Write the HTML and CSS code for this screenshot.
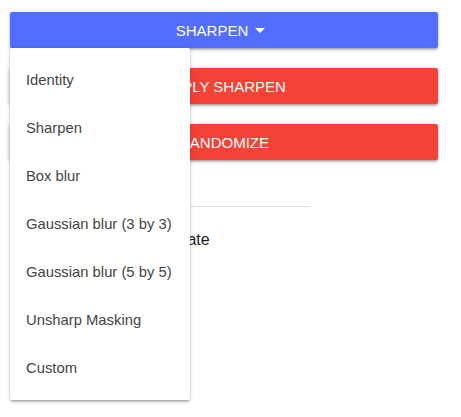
FILE: index.html
```html
<!DOCTYPE html>
<html>
<head>
<meta charset="utf-8">
<link rel="stylesheet" href="styles.css">
</head>
<body>
<div class="page">
  <div class="controls">
    <button class="btn btn-blue">SHARPEN<svg class="caret" width="24" height="24" viewBox="0 0 24 24"><path d="M7 10l5 5 5-5z" fill="#fff"/></svg></button>
    <button class="btn btn-red">APPLY SHARPEN</button>
    <button class="btn btn-red">RANDOMIZE</button>
  </div>
  <div class="divider"></div>
  <label class="option">Animate</label>
  <ul class="menu">
    <li>Identity</li>
    <li>Sharpen</li>
    <li>Box blur</li>
    <li>Gaussian blur (3 by 3)</li>
    <li>Gaussian blur (5 by 5)</li>
    <li>Unsharp Masking</li>
    <li>Custom</li>
  </ul>
</div>
</body>
</html>
```
FILE: styles.css
```css
* { box-sizing: border-box; }
html, body { margin: 0; padding: 0; background: #fff; }
body { font-family: "Liberation Sans", Arial, sans-serif; }
.page {
  position: relative;
  min-height: 417px;
  padding: 12px 23px 0 10px;
}
.controls {
  display: flex;
  flex-direction: column;
  gap: 20px;
}
.btn {
  height: 36px;
  border: none;
  border-radius: 2px;
  color: #fff;
  font-family: "Liberation Sans", Arial, sans-serif;
  font-size: 15px;
  display: flex;
  align-items: center;
  justify-content: center;
  padding: 0 16px;
  box-shadow: 0 2px 2px 0 rgba(0,0,0,0.14), 0 3px 1px -2px rgba(0,0,0,0.12), 0 1px 5px 0 rgba(0,0,0,0.2);
}
.btn-blue { background: #536dfe; }
.btn-red { background: #f44336; }
.caret { display: block; }
.divider {
  width: 300px;
  height: 1px;
  background: #e0e0e0;
  margin-top: 46px;
}
.option {
  display: block;
  font-size: 16px;
  color: #222;
  padding-left: 141px;
  margin-top: 24px;
}
.menu {
  position: absolute;
  top: 48px;
  left: 10px;
  width: 180px;
  margin: 0;
  padding: 8px 0;
  list-style: none;
  background: #fff;
  border-radius: 2px;
  box-shadow: 0 2px 2px 0 rgba(0,0,0,0.14), 0 3px 1px -2px rgba(0,0,0,0.12), 0 1px 5px 0 rgba(0,0,0,0.2);
}
.menu li {
  height: 48px;
  line-height: 48px;
  padding-left: 16px;
  font-size: 14.8px;
  color: #444;
}
```
